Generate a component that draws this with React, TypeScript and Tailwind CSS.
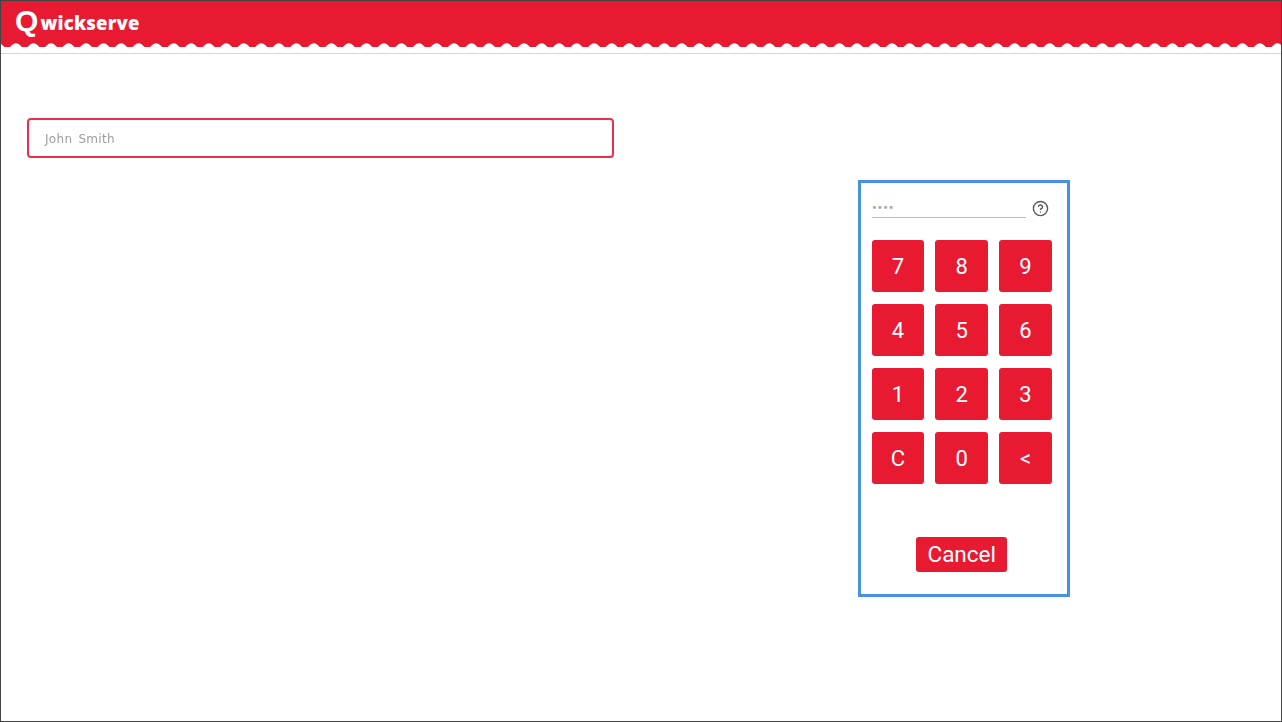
import React from "react";
import { CircleHelp } from "lucide-react";

const keys = ["7", "8", "9", "4", "5", "6", "1", "2", "3", "C", "0", "<"];

function Wave() {
  const bumps = Array.from({ length: 76 }, (_, i) => 15 + (i - 1) * 17.52);
  const d =
    "M-20 5 " +
    bumps
      .map((x) => `L${x - 8.76} 5 C${x - 5} 5 ${x - 4} 0.3 ${x} 0.3 C${x + 4} 0.3 ${x + 5} 5 ${x + 8.76} 5`)
      .join(" ") +
    " L1300 6 L-20 6 Z";
  return (
    <svg className="block w-full h-[6px] -mt-[4px] relative" viewBox="0 0 1280 6" preserveAspectRatio="none">
      <path d={d} fill="#ffffff" />
    </svg>
  );
}

export default function App() {
  return (
    <div className="w-[1282px] h-[722px] border border-[#444444] bg-white overflow-hidden font-['Roboto',sans-serif]">
      <header className="h-[53px] border-b border-[#f6c9cf] bg-white">
        <div className="h-[46px] bg-[#e81a32] flex items-start pl-[14px] text-white">
          <span className="w-[26px] text-[30px] leading-[40px] font-['Liberation_Sans',sans-serif] font-bold">Q</span>
          <span className="text-[18.5px] leading-[20px] mt-[12px] ml-[-0.5px] tracking-[0.2px] font-['Open_Sans',sans-serif] font-extrabold">wickserve</span>
        </div>
        <Wave />
      </header>
      <main className="flex items-start">
        <div className="ml-[26px] mt-[64px] w-[587px] h-[40px] border-2 border-[#e8304a] rounded-[4px] flex items-center pl-[16px]">
          <span className="text-[12px] mt-[1px] tracking-[0.3px] [word-spacing:2px] blur-[0.3px] text-[#9d9da5] font-['DejaVu_Sans',sans-serif]">John Smith</span>
        </div>
        <section className="ml-[244px] mt-[126px] w-[212px] h-[417px] border-[3px] border-[#4a90e2] pl-[10.7px] flex flex-col">
          <div className="flex items-center mt-[15px] h-[20px] ml-[0.3px]">
            <div className="w-[154px] h-[20px] border-b border-[#bdbdbd] text-[14px] leading-[20px] tracking-[0.9px] text-[#a8a8a8]">••••</div>
            <CircleHelp className="ml-[6px] w-[17px] h-[17px] text-[#5a5a5a]" strokeWidth={2} />
          </div>
          <div className="grid grid-cols-[52.6px_52.6px_52.6px] gap-x-[11.2px] gap-y-[11.6px] mt-[22px]">
            {keys.map((k) => (
              <button key={k} className="h-[52.4px] rounded-[3px] bg-[#e81a32] text-white text-[22px] flex items-center justify-center">
                {k}
              </button>
            ))}
          </div>
          <button className="mt-[53px] ml-[44.3px] w-[91.5px] h-[34.5px] rounded-[3px] bg-[#e81a32] text-white text-[22.5px] leading-none flex items-center justify-center">
            Cancel
          </button>
        </section>
      </main>
    </div>
  );
}
